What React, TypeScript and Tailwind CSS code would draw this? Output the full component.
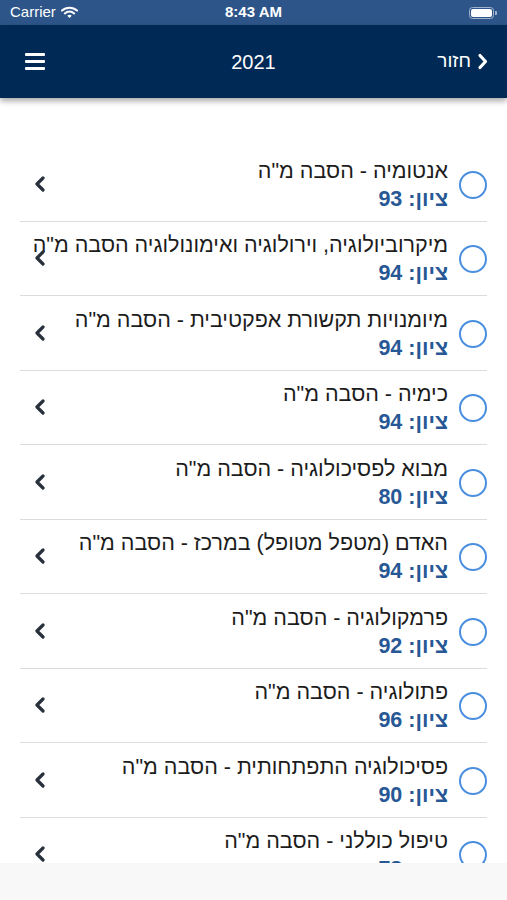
import React from "react";

const rows = [
  { t: 'אנטומיה - הסבה מ"ה', s: "93" },
  { t: 'מיקרוביולוגיה, וירולוגיה ואימונולוגיה הסבה מ"ה', s: "94" },
  { t: 'מיומנויות תקשורת אפקטיבית - הסבה מ"ה', s: "94" },
  { t: 'כימיה - הסבה מ"ה', s: "94" },
  { t: 'מבוא לפסיכולוגיה - הסבה מ"ה', s: "80" },
  { t: 'האדם (מטפל מטופל) במרכז - הסבה מ"ה', s: "94" },
  { t: 'פרמקולוגיה - הסבה מ"ה', s: "92" },
  { t: 'פתולוגיה - הסבה מ"ה', s: "96" },
  { t: 'פסיכולוגיה התפתחותית - הסבה מ"ה', s: "90" },
  { t: 'טיפול כוללני - הסבה מ"ה', s: "78" },
];

function Chevron() {
  return (
    <svg width="14" height="16" viewBox="0 0 14 16" className="shrink-0 relative z-10">
      <path d="M10 2 L4 8 L10 14" fill="none" stroke="#27303b" strokeWidth="3.2" strokeLinecap="round" strokeLinejoin="round" />
    </svg>
  );
}

export default function App() {
  return (
    <div
      className="w-[507px] h-[900px] flex flex-col bg-white overflow-hidden"
      style={{ fontFamily: '"Liberation Sans", Arial, sans-serif' }}
    >
      {/* status bar */}
      <div className="h-[25px] bg-[#2d5589] flex items-center justify-between px-[10px] text-white relative shrink-0">
        <div className="flex items-center gap-[5px]">
          <span className="text-[15px]">Carrier</span>
          <svg width="17" height="13" viewBox="0 0 17 13">
            <path d="M1 4.6 A11 11 0 0 1 16 4.6" fill="none" stroke="white" strokeWidth="2" strokeLinecap="round" />
            <path d="M3.8 7.4 A7 7 0 0 1 13.2 7.4" fill="none" stroke="white" strokeWidth="2" strokeLinecap="round" />
            <path d="M8.5 12 L6.3 9.8 A3.2 3.2 0 0 1 10.7 9.8 Z" fill="white" />
          </svg>
        </div>
        <span className="absolute left-1/2 -translate-x-1/2 text-[15px] font-bold">8:43 AM</span>
        <div className="flex items-center">
          <div className="w-[25px] h-[12px] rounded-[3.5px] border border-[#9fb3cc] p-[1px]">
            <div className="w-full h-full bg-white rounded-[2px]" />
          </div>
          <div className="w-[2px] h-[4px] bg-[#9fb3cc] rounded-r-[1px] ml-[1px]" />
        </div>
      </div>
      {/* nav bar */}
      <div className="h-[73px] bg-[#002a55] flex items-center justify-between px-[25px] text-white relative z-10 shadow-[0_3px_6px_rgba(0,0,0,0.35)] shrink-0">
        <div className="flex flex-col gap-[4px] w-[20px]">
          <div className="h-[3px] bg-white rounded-[1px]" />
          <div className="h-[3px] bg-white rounded-[1px]" />
          <div className="h-[3px] bg-white rounded-[1px]" />
        </div>
        <span className="absolute left-1/2 -translate-x-1/2 text-[20px]">2021</span>
        <div className="flex items-center gap-[6px] mr-[-6px]">
          <span className="text-[19px]" dir="rtl">חזור</span>
          <svg width="11" height="17" viewBox="0 0 11 17">
            <path d="M3 2.5 L8.5 8.5 L3 14.5" fill="none" stroke="white" strokeWidth="3.2" strokeLinecap="round" strokeLinejoin="round" />
          </svg>
        </div>
      </div>
      {/* list */}
      <div className="flex-1 overflow-hidden pt-[49px]">
        {rows.map((r, i) => (
          <div key={i} className="mx-[20px] h-[74.5px] border-b-[1.5px] border-[#dcdcdc] flex items-center gap-[11px] pl-[13px]" dir="ltr">
            <Chevron />
            <div className="flex-1 min-w-0 flex flex-col items-start pt-[2px]" dir="rtl">
              <div className="text-[21.5px] leading-[28px] text-[#1c1c1c] whitespace-nowrap">{r.t}</div>
              <div className="text-[21.5px] leading-[28px] font-bold text-[#275895] whitespace-nowrap">ציון: {r.s}</div>
            </div>
            <div className="w-[28px] h-[28px] rounded-full border-2 border-[#4a8ee0] shrink-0 mt-[2px]" />
          </div>
        ))}
      </div>
      {/* bottom bar */}
      <div className="h-[37px] bg-[#f8f8f8] shrink-0 relative z-10" />
    </div>
  );
}
